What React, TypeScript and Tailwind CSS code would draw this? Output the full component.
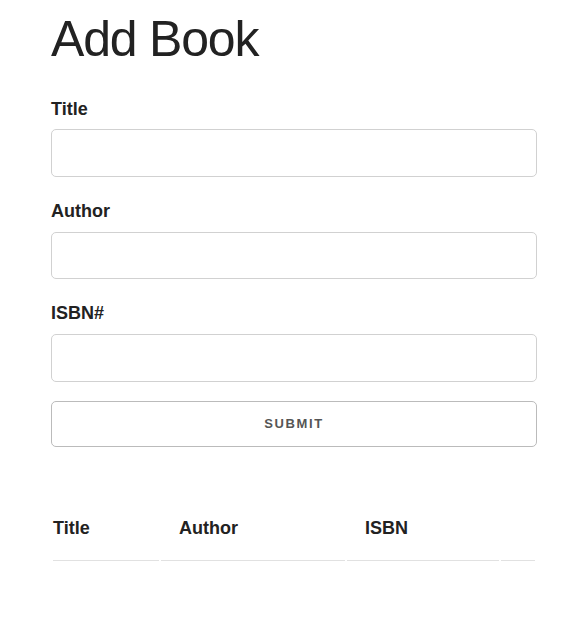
import { useState } from 'react'

type Book = { title: string; author: string; isbn: string }

const fields: { key: keyof Book; label: string }[] = [
  { key: 'title', label: 'Title' },
  { key: 'author', label: 'Author' },
  { key: 'isbn', label: 'ISBN#' },
]

export default function App() {
  const [form, setForm] = useState<Book>({ title: '', author: '', isbn: '' })
  const [books, setBooks] = useState<Book[]>([])

  const handleSubmit = (e: React.FormEvent) => {
    e.preventDefault()
    if (!form.title) return
    setBooks([...books, form])
    setForm({ title: '', author: '', isbn: '' })
  }

  return (
    <div className="min-h-screen bg-white text-[#222] font-['Liberation_Sans',Arial,sans-serif]">
      <div className="ml-[51px] w-[486px] pt-[8.5px]">
        <h1 className="text-[50px] leading-[60px] tracking-[-1.2px] mb-[26px]">Add Book</h1>

        <form onSubmit={handleSubmit}>
          {fields.map(f => (
            <div key={f.key}>
              <label className="block text-[18px] font-bold leading-[28.8px] mb-[6px]">
                {f.label}
              </label>
              <input
                type="text"
                value={form[f.key]}
                onChange={e => setForm({ ...form, [f.key]: e.target.value })}
                className="block w-full h-[47.5px] px-3 border border-[#d1d1d1] rounded-[5px] mb-[20.2px] outline-none focus:border-[#33c3f0]"
              />
            </div>
          ))}
          <button
            type="submit"
            className="flex items-center justify-center w-full h-[46px] mt-[-1px] border border-[#bbb] rounded-[5px] bg-transparent text-[13px] font-bold tracking-[1.6px] text-[#555] uppercase"
          >
            Submit
          </button>
        </form>

        <table className="w-full mt-[51.5px] border-separate border-spacing-[2px] text-[18px]">
          <thead>
            <tr>
              <th className="w-[106px] pl-0 pr-[18px] pt-[14px] pb-[16.4px] text-left font-bold leading-[28.8px] border-b border-[#e1e1e1]">
                Title
              </th>
              <th className="w-[184px] px-[18px] pt-[14px] pb-[16.4px] text-left font-bold leading-[28.8px] border-b border-[#e1e1e1]">
                Author
              </th>
              <th className="w-[152px] px-[18px] pt-[14px] pb-[16.4px] text-left font-bold leading-[28.8px] border-b border-[#e1e1e1]">
                ISBN
              </th>
              <th className="w-[34px] pl-[18px] pr-0 border-b border-[#e1e1e1]"></th>
            </tr>
          </thead>
          <tbody>
            {books.map((b, i) => (
              <tr key={i}>
                <td className="py-3 pr-[18px] border-b border-[#e1e1e1]">{b.title}</td>
                <td className="py-3 px-[18px] border-b border-[#e1e1e1]">{b.author}</td>
                <td className="py-3 px-[18px] border-b border-[#e1e1e1]">{b.isbn}</td>
                <td className="py-3 pl-[18px] border-b border-[#e1e1e1]"></td>
              </tr>
            ))}
          </tbody>
        </table>
      </div>
    </div>
  )
}
